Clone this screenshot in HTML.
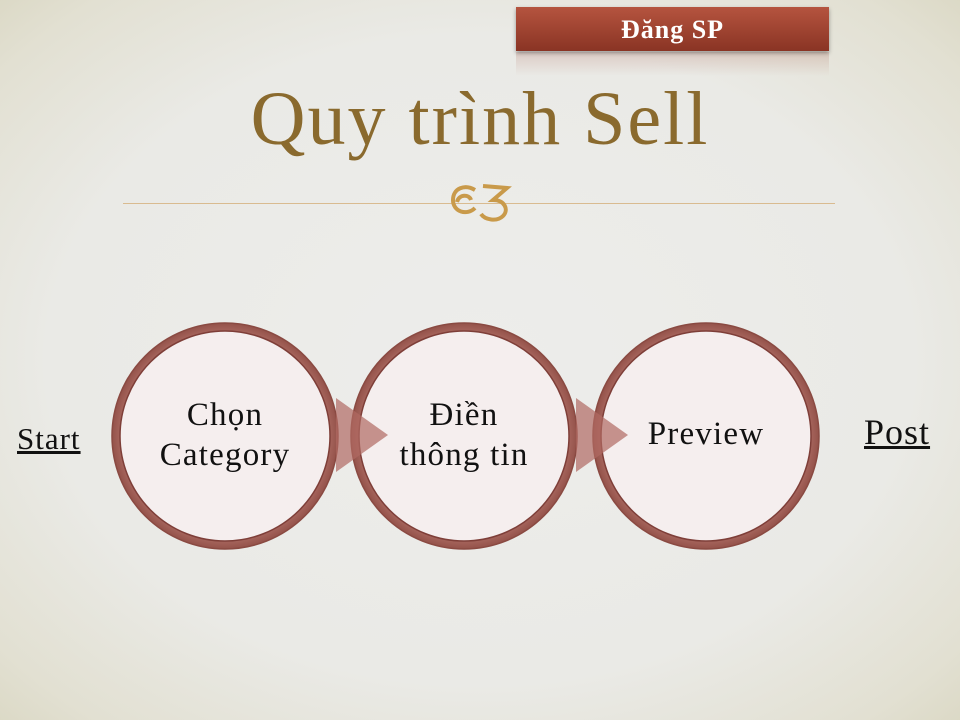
<!DOCTYPE html>
<html><head><meta charset="utf-8"><style>
html,body{margin:0;padding:0}
body{width:960px;height:720px;overflow:hidden;position:relative;font-family:"Liberation Serif",serif;
background:radial-gradient(ellipse 75% 75% at 50% 50%,#ededeb 0%,#eaeae6 60%,#e2e0d2 85%,#d8d5bf 100%);}
.btn{position:absolute;left:516px;top:7px;width:313px;height:44px;background:linear-gradient(#b5543f,#8a3424);
box-shadow:0 2px 4px rgba(0,0,0,.35);color:#fff;font-weight:bold;font-size:26px;text-align:center;line-height:46px;letter-spacing:1px}
.refl{position:absolute;left:516px;top:52px;width:313px;height:24px;background:linear-gradient(rgba(150,60,40,.18),rgba(150,60,40,0));}
.title{position:absolute;left:0;width:960px;top:76px;text-align:center;font-size:76px;letter-spacing:2px;color:#8a6a2e;}
.line{position:absolute;left:123px;width:712px;top:203px;height:1px;background:#d9bb90;}
.lbl{position:absolute;color:#111;text-decoration:underline;letter-spacing:1px}
.ct{position:absolute;font-size:33px;letter-spacing:1.2px;color:#111;text-align:center;line-height:40px;}
</style></head><body>
<div class="refl"></div>
<div class="btn">Đăng SP</div>
<div class="title">Quy trình Sell</div>
<div class="line"></div>
<svg style="position:absolute;left:445px;top:180px" width="70" height="45" viewBox="0 0 70 45">
<path d="M30 10 C20 4 8 8 8 20 C8 32 22 36 30 28 M12 22 C14 14 24 14 26 20" stroke="#c99a4a" stroke-width="4" fill="none"/>
<path d="M38 6 L62 8 L48 20 C60 20 64 30 58 36 C52 42 40 40 36 34" stroke="#c99a4a" stroke-width="4" fill="none"/>
</svg>
<svg style="position:absolute;left:0;top:0" width="960" height="720">
<defs><radialGradient id="g" cx="50%" cy="50%" r="50%"><stop offset="85%" stop-color="#b8786f"/><stop offset="100%" stop-color="#94524a"/></radialGradient></defs>
<g stroke="#8a4a42" stroke-width="1.5">
<circle cx="225" cy="436" r="113" fill="url(#g)"/>
<circle cx="464" cy="436" r="113" fill="url(#g)"/>
<circle cx="706" cy="436" r="113" fill="url(#g)"/>
</g>
<g fill="#f5eeee" stroke="#7e3e38" stroke-width="1.5">
<circle cx="225" cy="436" r="105"/>
<circle cx="464" cy="436" r="105"/>
<circle cx="706" cy="436" r="105"/>
</g>
<polygon points="336,398 388,435 336,472" fill="#b06a62" opacity="0.7"/>
<polygon points="576,398 628,435 576,472" fill="#b06a62" opacity="0.7"/>
</svg>
<div class="ct" style="left:115px;width:220px;top:395px">Chọn<br>Category</div>
<div class="ct" style="left:354px;width:220px;top:395px">Điền<br>thông tin</div>
<div class="ct" style="left:596px;width:220px;top:414px">Preview</div>
<div class="lbl" style="left:17px;top:421px;font-size:31px">Start</div>
<div class="lbl" style="left:864px;top:411px;font-size:36px">Post</div>
</body></html>
